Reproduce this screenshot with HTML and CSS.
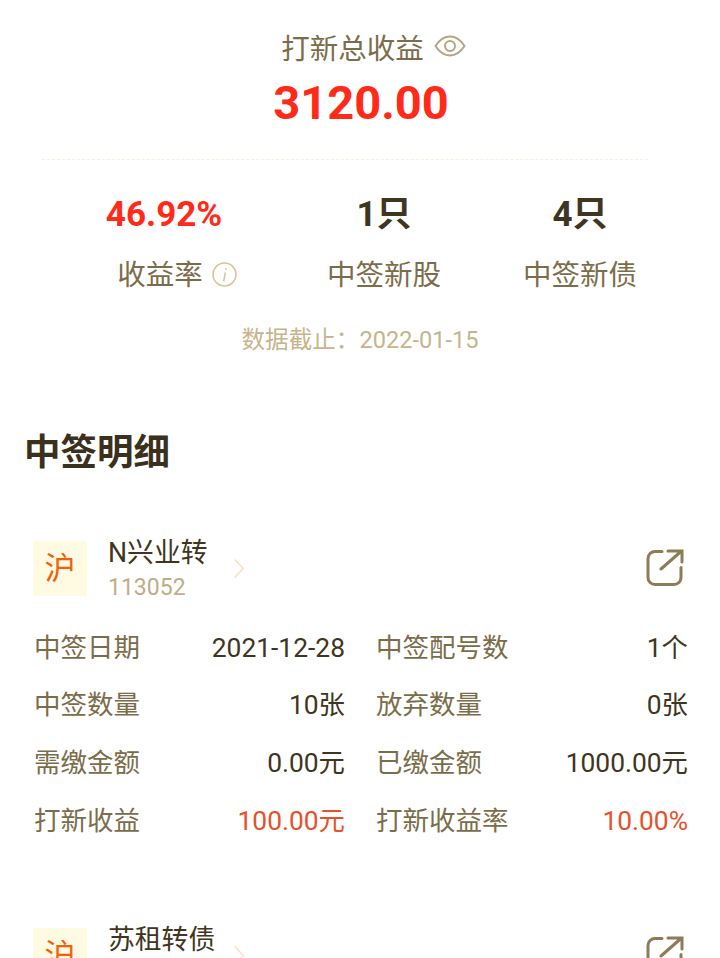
FILE: index.html
```html
<!DOCTYPE html>
<html lang="zh-CN">
<head>
<meta charset="UTF-8">
<meta name="viewport" content="width=device-width, initial-scale=1.0">
<title>打新总收益</title>
<link rel="stylesheet" href="styles.css">
</head>
<body>

<section class="summary">
    <div class="summary-title">
        <span>打新总收益</span>
        <svg class="icon-eye" viewBox="0 0 32 24" fill="none" stroke="#b5a582" stroke-width="2">
            <path d="M1.500 12C6 5 10.500 2.500 16 2.500S26 5 30.500 12C26 19 21.500 21.500 16 21.500S6 19 1.500 12Z"/>
            <circle cx="16" cy="12" r="5"/>
        </svg>
    </div>
    <div class="summary-total">3120.00</div>
</section>

<section class="stats">
    <div class="stat">
        <div class="stat-value red">46.92%</div>
        <div class="stat-label stat-label-info">
            <span>收益率</span>
            <svg class="icon-info" viewBox="0 0 24 24" fill="none" stroke="#d9c49a" stroke-width="1.500">
                <circle cx="12" cy="12" r="11"/>
                <path d="M13.200 5.800v1.600M12.800 10l-1.600 8.500"/>
            </svg>
        </div>
    </div>
    <div class="stat">
        <div class="stat-value">1只</div>
        <div class="stat-label"><span>中签新股</span></div>
    </div>
    <div class="stat">
        <div class="stat-value">4只</div>
        <div class="stat-label"><span>中签新债</span></div>
    </div>
</section>

<p class="deadline">数据截止：2022-01-15</p>

<h2 class="section-title">中签明细</h2>

<div class="item">
    <div class="item-head">
        <div class="market">沪</div>
        <div class="item-name">
            <div class="name">N兴业转</div>
            <div class="code">113052</div>
        </div>
        <svg class="icon-arrow" viewBox="0 0 12 22" fill="none" stroke="#f3e3c0" stroke-width="1.500">
            <path d="M1.500 1.500L10.500 11L1.500 20.500"/>
        </svg>
        <svg class="icon-share" viewBox="0 0 38 38" fill="none" stroke="#8c7c58" stroke-width="3" stroke-linecap="round">
            <path d="M16 2.500H9a7 7 0 0 0-7 7v19a7 7 0 0 0 7 7h19a7 7 0 0 0 7-7v-10"/>
            <path d="M15 20L35.500 2M22 2h14v11"/>
        </svg>
    </div>
    <div class="rows">
        <div class="pair"><span class="k">中签日期</span><span class="v">2021-12-28</span></div>
        <div class="pair"><span class="k">中签配号数</span><span class="v">1个</span></div>
        <div class="pair"><span class="k">中签数量</span><span class="v">10张</span></div>
        <div class="pair"><span class="k">放弃数量</span><span class="v">0张</span></div>
        <div class="pair"><span class="k">需缴金额</span><span class="v">0.00元</span></div>
        <div class="pair"><span class="k">已缴金额</span><span class="v">1000.00元</span></div>
        <div class="pair"><span class="k">打新收益</span><span class="v orange">100.00元</span></div>
        <div class="pair"><span class="k">打新收益率</span><span class="v orange">10.00%</span></div>
    </div>
</div>

<div class="item">
    <div class="item-head">
        <div class="market">沪</div>
        <div class="item-name">
            <div class="name">苏租转债</div>
        </div>
        <svg class="icon-arrow" viewBox="0 0 12 22" fill="none" stroke="#f3e3c0" stroke-width="1.500">
            <path d="M1.500 1.500L10.500 11L1.500 20.500"/>
        </svg>
        <svg class="icon-share" viewBox="0 0 38 38" fill="none" stroke="#8c7c58" stroke-width="3" stroke-linecap="round">
            <path d="M16 2.500H9a7 7 0 0 0-7 7v19a7 7 0 0 0 7 7h19a7 7 0 0 0 7-7v-10"/>
            <path d="M15 20L35.500 2M22 2h14v11"/>
        </svg>
    </div>
</div>

</body>
</html>
```
FILE: styles.css
```css
html, body {
    height: 958px;
    overflow: hidden;
}
body {
    margin: 0;
    background: #fff;
    color: #3f3520;
    font-family: Roboto, "Noto Sans CJK SC", sans-serif;
}
svg {
    display: block;
    flex: none;
}
.red {
    color: #ff2a18;
}
.orange {
    color: #e8502a;
}
.summary {
    margin: 0 72px 0 42px;
    padding-top: 25px;
    height: 160px;
    box-sizing: border-box;
    border-bottom: 1px dashed #f8efdc;
    text-align: center;
}
.summary-title {
    display: flex;
    justify-content: center;
    align-items: center;
    gap: 10px;
    height: 42px;
    padding-left: 57px;
    color: #7c6d4a;
    font-size: 28.500px;
}
.icon-eye {
    width: 32px;
    height: 24px;
}
.summary-total {
    margin-top: 8px;
    padding-left: 32px;
    color: #ff2a18;
    font-size: 47px;
    font-weight: 700;
    line-height: 56px;
}
.stats {
    display: grid;
    grid-template-columns: 208px 232px 160px;
    margin: 33px 0 0 60px;
    text-align: center;
}
.stat-value {
    font-size: 35px;
    font-weight: 700;
    line-height: 44px;
}
.stat-label {
    display: flex;
    justify-content: center;
    align-items: center;
    gap: 9px;
    margin-top: 18px;
    color: #7c6d4a;
    font-size: 28.500px;
    line-height: 42px;
}
.stat-label-info {
    padding-right: 8px;
}
.icon-info {
    width: 25px;
    height: 25px;
    margin: -3px -34px 0 0;
}
.deadline {
    margin: 26px 0 0;
    color: #c8b48c;
    font-size: 23.600px;
    line-height: 34px;
    text-align: center;
}
.section-title {
    margin: 71px 0 0 24px;
    color: #3a301c;
    font-size: 36.500px;
    font-weight: 700;
    line-height: 50px;
}
.item {
    margin-top: 62px;
    padding: 0 36px 0 33px;
    height: 325px;
}
.item-head {
    display: flex;
    align-items: center;
    height: 56px;
}
.market {
    display: flex;
    justify-content: center;
    align-items: center;
    width: 54px;
    height: 55px;
    padding-bottom: 5px;
    box-sizing: border-box;
    background: #fffbe3;
    color: #f2600c;
    font-size: 31px;
}
.item-name {
    align-self: flex-start;
    margin: -3px 0 0 21px;
    width: 125px;
}
.name {
    color: #3f3520;
    font-size: 26.800px;
    line-height: 32px;
}
.code {
    margin-top: 3px;
    color: #c0ad88;
    font-size: 23px;
    line-height: 32px;
}
.icon-arrow {
    width: 12px;
    height: 21px;
}
.icon-share {
    width: 38px;
    height: 38px;
    margin-left: auto;
}
.rows {
    display: grid;
    grid-template-columns: 311px 312px;
    grid-auto-rows: 57.670px;
    column-gap: 31px;
    align-items: center;
    margin: 23px 0 0 1px;
    width: 654px;
    font-size: 26.400px;
}
.pair {
    display: flex;
    justify-content: space-between;
    align-items: baseline;
    line-height: 36px;
    white-space: nowrap;
}
.k {
    color: #7c6d4a;
    font-size: 26.500px;
}
```
